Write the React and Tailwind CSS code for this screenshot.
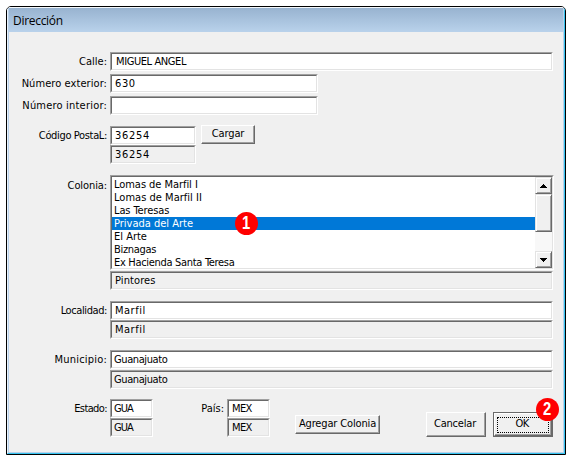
import React, { useState } from 'react';

const colonias = [
  { name: 'Lomas de Marfil I', tracking: 'tracking-[-0.05px]' },
  { name: 'Lomas de Marfil II', tracking: 'tracking-[0.02px]' },
  { name: 'Las Teresas', tracking: 'tracking-[-0.1px]' },
  { name: 'Privada del Arte', tracking: 'tracking-[0px]' },
  { name: 'El Arte', tracking: 'tracking-[0px]' },
  { name: 'Biznagas', tracking: 'tracking-[-0.3px]' },
  { name: 'Ex Hacienda Santa Teresa', tracking: 'tracking-[-0.31px]' },
];

const Label = ({ children, className = '', width = 'w-[98px]' }) => (
  <div className={`mr-[3px] h-[19px] shrink-0 text-right leading-[20px] whitespace-nowrap ${width} ${className}`}>
    {children}
  </div>
);

// Sunken box, white when it can be edited
const Field = ({ value, readOnly, width = 'w-[443px]', className = 'pl-[3px]' }) => (
  <div
    className={`h-[19px] border border-t-[#a0a0a0] border-l-[#a0a0a0] border-r-white border-b-white ${width}`}
  >
    <div
      className={`h-[17px] border border-t-[#696969] border-l-[#696969] border-r-[#e3e3e3] border-b-[#e3e3e3] leading-[16px] whitespace-nowrap ${className} ${
        readOnly ? 'bg-[#f0f0f0]' : 'bg-white'
      }`}
    >
      {value}
    </div>
  </div>
);

const Button = ({ children, className }) => (
  <button
    className={`flex shrink-0 justify-center border border-t-white border-l-white border-r-[#696969] border-b-[#696969] bg-[#f0f0f0] whitespace-nowrap shadow-[inset_-1px_-1px_0_#a0a0a0] ${className}`}
  >
    {children}
  </button>
);

const Badge = ({ children, className }) => (
  <div
    className={`absolute flex size-[23px] items-center justify-center rounded-full bg-[#ff0000] font-['Liberation_Sans',sans-serif] text-[18px] leading-[23px] font-bold text-white ${className}`}
  >
    <span className="scale-x-[0.82]">{children}</span>
  </div>
);

const ScrollPart = ({ className, children }) => (
  <div
    className={`flex w-[17px] items-center justify-center border border-t-[#e3e3e3] border-l-[#e3e3e3] border-r-[#696969] border-b-[#696969] bg-[#f0f0f0] shadow-[inset_1px_1px_0_#fff,inset_-1px_-1px_0_#a0a0a0] ${className}`}
  >
    {children}
  </div>
);

const App = () => {
  const [selected, setSelected] = useState('Privada del Arte');

  return (
    <div className="h-[462px] w-[574px] bg-white pt-[6px] pl-[6px] font-['DejaVu_Sans_Condensed','DejaVu_Sans',sans-serif] text-[11px] text-black">
      <div className="h-[449px] w-[560px] overflow-hidden rounded-t-[5px] border border-black bg-white">
        <div className="h-[447px] border-t border-r border-b border-l border-t-[#f4f8fc] border-r-[#35c3ef] border-b-[#35c3ef] border-l-[#e8f2fb]">
          <div className="h-[445px] border-r border-b border-l border-r-[#b9d1ea] border-b-[#b9d1ea] border-l-[#b9d1ea] bg-[#f0f0f0]">
            <div className="h-[24px] bg-linear-to-b from-[#98b3d0] to-[#b9d2eb] pl-[4px] font-['Open_Sans',sans-serif] text-[12px] leading-[25px] tracking-[-0.3px]">
              Dirección
            </div>

            <div className="mt-[20px] flex">
              <Label>Calle:</Label>
              <Field value="MIGUEL ANGEL" className="pl-[4px] tracking-[-0.4px]" />
            </div>
            <div className="mt-[3px] flex">
              <Label className="tracking-[0.07px]">Número exterior:</Label>
              <Field value="630" width="w-[208px]" className="pl-[3px] tracking-[0.6px]" />
            </div>
            <div className="mt-[3px] flex">
              <Label className="tracking-[0.2px]">Número interior:</Label>
              <Field value="" width="w-[208px]" />
            </div>

            <div className="mt-[10px] flex">
              <Label className="mt-px tracking-[-0.35px]">Código PostaL:</Label>
              <div className="mt-px w-[86px]">
                <Field value="36254" width="w-[86px]" className="pl-[3px] tracking-[0.7px]" />
                <Field value="36254" readOnly width="w-[86px]" className="pl-[3px] tracking-[0.7px]" />
              </div>
              <Button className="ml-[5px] h-[19px] w-[54px] leading-[15px] tracking-[-0.1px]">Cargar</Button>
            </div>

            <div className="mt-[11px] flex">
              <Label className="mt-px tracking-[-0.1px]">Colonia:</Label>
              <div>
                <div className="h-[95px] w-[444px] border border-t-[#a0a0a0] border-l-[#a0a0a0] border-r-white border-b-white">
                  <div className="relative flex h-[93px] border border-t-[#696969] border-l-[#696969] border-r-[#e3e3e3] border-b-[#e3e3e3] bg-white">
                    <ul className="w-[423px] pt-px">
                      {colonias.map((c) => (
                        <li
                          key={c.name}
                          onClick={() => setSelected(c.name)}
                          className={`h-[13px] pl-[2px] leading-[13px] ${c.tracking} ${
                            c.name === selected ? 'bg-[#0078d7] text-white' : ''
                          }`}
                        >
                          {c.name}
                        </li>
                      ))}
                    </ul>
                    <div className="flex w-[17px] flex-col bg-[#f8f8f8]">
                      <ScrollPart className="h-[17px]">
                        <svg width="7" height="4" viewBox="0 0 7 4" shapeRendering="crispEdges">
                          <path d="M3 0h1v1h1v1h1v1h1v1H0V3h1V2h1V1h1z" />
                        </svg>
                      </ScrollPart>
                      <ScrollPart className="h-[38px]" />
                      <ScrollPart className="mt-auto h-[17px]">
                        <svg width="7" height="4" viewBox="0 0 7 4" shapeRendering="crispEdges">
                          <path d="M0 0h7v1H6v1H5v1H4v1H3V3H2V2H1V1H0z" />
                        </svg>
                      </ScrollPart>
                    </div>
                    <Badge className="top-[35px] left-[123px]">1</Badge>
                  </div>
                </div>
                <div className="mt-px">
                  <Field value="Pintores" readOnly className="pl-[3px] tracking-[0.1px]" />
                </div>
              </div>
            </div>

            <div className="mt-[11px] flex">
              <Label className="tracking-[-0.4px]">Localidad:</Label>
              <div>
                <Field value="Marfil" className="pl-[3px] tracking-[0.5px]" />
                <Field value="Marfil" readOnly className="pl-[3px] tracking-[0.5px]" />
              </div>
            </div>

            <div className="mt-[11px] flex">
              <Label className="tracking-[0.2px]">Municipio:</Label>
              <div className="flex flex-col gap-px">
                <Field value="Guanajuato" className="pl-[2px] tracking-[-0.4px]" />
                <Field value="Guanajuato" readOnly className="pl-[2px] tracking-[-0.4px]" />
              </div>
            </div>

            <div className="mt-[10px] flex">
              <Label className="tracking-[-0.6px]">Estado:</Label>
              <div>
                <Field value="GUA" width="w-[43px]" className="pl-[2px] tracking-[-0.9px]" />
                <Field value="GUA" readOnly width="w-[43px]" className="pl-[2px] tracking-[-0.9px]" />
              </div>
              <Label width="w-[71px]">País:</Label>
              <div>
                <Field value="MEX" width="w-[43px]" className="pl-[3px] tracking-[-0.6px]" />
                <Field value="MEX" readOnly width="w-[43px]" className="pl-[3px] tracking-[-0.6px]" />
              </div>
              <Button className="mt-[16px] ml-[25px] h-[19px] w-[85px] leading-[15px] tracking-[-0.15px]">
                Agregar Colonia
              </Button>
              <Button className="mt-[13px] ml-[46px] h-[25px] w-[60px] pr-[2px] leading-[21px] tracking-[-0.2px]">
                Cancelar
              </Button>
              <div className="relative mt-[13px] ml-[7px] h-[25px] w-[60px] border border-[#696969]">
                <Button className="h-[23px] w-[58px] pr-[2px] leading-[19px] tracking-[-0.7px]">OK</Button>
                <div className="absolute top-[4px] left-[3px] h-[16px] w-[52px] border border-dotted border-black" />
                <Badge className="-top-[15px] left-[42px]">2</Badge>
              </div>
            </div>
          </div>
        </div>
      </div>
    </div>
  );
};

export default App;
